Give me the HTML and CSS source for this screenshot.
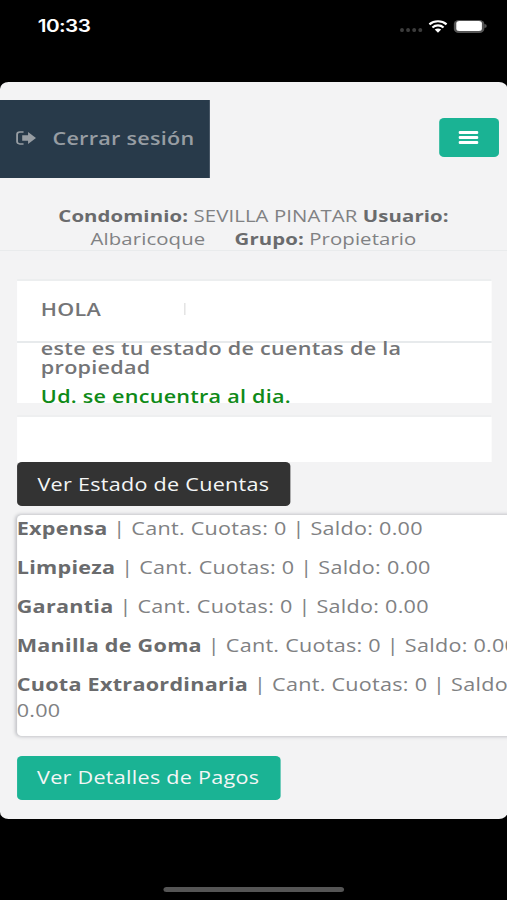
FILE: index.html
```html
<!DOCTYPE html>
<html lang="es">
<head>
<meta charset="utf-8">
<meta name="viewport" content="width=device-width, initial-scale=1">
<title>Estado de cuentas</title>
<link rel="stylesheet" href="styles.css">
</head>
<body>
<div class="device">
  <header class="status">
    <span class="clock">10:33</span>
    <div class="status-icons">
      <span class="signal"><i></i><i></i><i></i><i></i></span>
      <svg class="wifi" viewBox="0 0 20 14" preserveAspectRatio="none">
        <path d="M1.2 4.7C6.2.3 13.8.3 18.8 4.7M4.3 8C7.6 5.1 12.4 5.1 15.7 8" fill="none" stroke="#fff" stroke-width="2.3"/>
        <path d="M6.7 10.3C8.6 8.7 11.4 8.7 13.3 10.3L10 13.6Z" fill="#fff"/>
      </svg>
      <span class="battery"><i></i></span><span class="battery-tip"></span>
    </div>
  </header>
  <main class="app">
    <nav class="topbar">
      <a class="logout">
        <svg viewBox="0 0 17 14" preserveAspectRatio="none">
          <path d="M6.3 1.1H3.3Q1 1.1 1 3.4V10.6Q1 12.9 3.3 12.9H6.3" fill="none" stroke="currentColor" stroke-width="1.5"/>
          <path d="M5.2 4.3H10V1L16.5 7L10 13V9.7H5.2Z" fill="currentColor"/>
        </svg>
        <span>Cerrar sesión</span>
      </a>
      <button class="menu" aria-label="Menú"><i></i><i></i><i></i></button>
    </nav>
    <div class="info">
      <div><b>Condominio:</b> SEVILLA PINATAR <b>Usuario:</b></div>
      <div>Albaricoque<b class="group">Grupo:</b> Propietario</div>
    </div>
    <section class="card">
      <div class="card-title"><span>HOLA</span><i class="divider"></i></div>
      <div class="card-body">
        <p class="lead">este es tu estado de cuentas de la<br>propiedad</p>
        <p class="ok">Ud. se encuentra al dia.</p>
      </div>
    </section>
    <section class="card blank"></section>
    <button class="btn dark">Ver Estado de Cuentas</button>
    <div class="list">
      <p><b>Expensa</b> | Cant. Cuotas: 0 | Saldo: 0.00</p>
      <p><b>Limpieza</b> | Cant. Cuotas: 0 | Saldo: 0.00</p>
      <p><b>Garantia</b> | Cant. Cuotas: 0 | Saldo: 0.00</p>
      <p><b>Manilla de Goma</b> | Cant. Cuotas: 0 | Saldo: 0.00</p>
      <p><b>Cuota Extraordinaria</b> | Cant. Cuotas: 0 | Saldo: 0.00</p>
    </div>
    <button class="btn green">Ver Detalles de Pagos</button>
  </main>
  <footer class="home"><i></i></footer>
</div>
</body>
</html>
```
FILE: styles.css
```css
* { box-sizing: border-box; }
html, body { margin: 0; width: 507px; height: 900px; overflow: hidden; background: #000; }
p { margin: 0; }
b { color: #6a6b6d; }
button { border: 0; padding: 0; font: inherit; letter-spacing: inherit; }
svg { display: block; }

/* Wide-pixel screen: 415.6 x 900 units stretched to the window width */
.device {
  width: 415.6px;
  height: 900px;
  transform: scaleX(1.22);
  transform-origin: 0 0;
  display: flex;
  flex-direction: column;
  font-family: "Open Sans", sans-serif;
  font-size: 17.7px;
  letter-spacing: 0.22px;
  color: #808183;
  white-space: nowrap;
}

.status {
  height: 82px;
  padding: 15px 17px 0 31px;
  display: flex;
  justify-content: space-between;
  align-items: flex-start;
}
.clock { font: 600 17px/22px Inter, sans-serif; letter-spacing: -0.5px; color: #fff; }
.status-icons { display: flex; align-items: center; height: 22px; }
.signal { display: flex; gap: 1.5px; margin: 8px 5px 0 0; }
.signal i { width: 3.5px; height: 4px; border-radius: 2px; background: #3c3c3c; }
.wifi { width: 16px; height: 13px; margin-right: 5px; }
.battery { width: 24.5px; height: 13px; padding: 1.5px; border-radius: 4px; background: #555; }
.battery i { display: block; height: 10px; border-radius: 2.5px; background: #fff; }
.battery-tip { width: 1.5px; height: 4px; margin-left: 0.5px; border-radius: 0 2px 2px 0; background: #555; }

.app { height: 737px; border-radius: 7px; background: #f3f3f4; overflow: hidden; }
.topbar {
  height: 114px;
  padding: 18px 7px 0 0;
  display: flex;
  justify-content: space-between;
  align-items: flex-start;
}
.logout {
  width: 172.3px;
  height: 77.5px;
  padding: 0 0 1px 13px;
  display: flex;
  align-items: center;
  gap: 13px;
  background: #283a4a;
  color: #979da3;
  font-weight: 600;
}
.logout svg { width: 17px; height: 14px; }
.menu {
  width: 49px;
  height: 39px;
  margin-top: 18px;
  border-radius: 4px;
  background: #1ab394;
  display: flex;
  flex-direction: column;
  align-items: center;
  justify-content: center;
  gap: 2.6px;
}
.menu i { width: 16px; height: 2.8px; border-radius: 1px; background: #fff; }

.info {
  height: 55px;
  padding-top: 8px;
  border-bottom: 1px solid #e9ebec;
  text-align: center;
  font-size: 16.7px;
  letter-spacing: 0.08px;
  line-height: 23px;
}
.group { margin-left: 24px; }

.card { width: 389.5px; margin: 27.5px 0 0 13.5px; border-top: 2px solid #eceeef; background: #fff; }
.card-title {
  height: 60px;
  padding: 0 0 4px 20px;
  display: flex;
  align-items: center;
  font-weight: 600;
  color: #747577;
}
.divider { width: 1px; height: 12px; margin-left: 68px; background: #ddd; }
.card-body { height: 62px; padding-left: 20px; border-top: 2px solid #e7eaec; font-weight: 600; color: #747577; }
.lead { line-height: 19.5px; margin-top: -4px; }
.ok { margin-top: 6px; line-height: 24px; color: #0f8a18; letter-spacing: 0.2px; }
.blank { height: 47px; margin-top: 12px; border-top-color: #eeeff0; }

.btn {
  display: block;
  height: 44px;
  margin-left: 13.5px;
  border-radius: 4px;
  color: #f4f6f6;
  text-align: center;
}
.dark { width: 224.5px; background: #333; }
.green { width: 216px; background: #1ab394; margin-top: 19.5px; padding-bottom: 1px; }

.list {
  width: 427px;
  height: 221px;
  margin: 9.5px 0 0 13.7px;
  border-radius: 4px;
  background: #fff;
  box-shadow: 0 0 3px 1px #c4c5c9;
  line-height: 26px;
  white-space: normal;
}
.list p { margin-bottom: 13px; }

.home { padding-top: 68px; display: flex; justify-content: center; }
.home i { width: 148px; height: 5px; border-radius: 3px; background: #555; }
```
